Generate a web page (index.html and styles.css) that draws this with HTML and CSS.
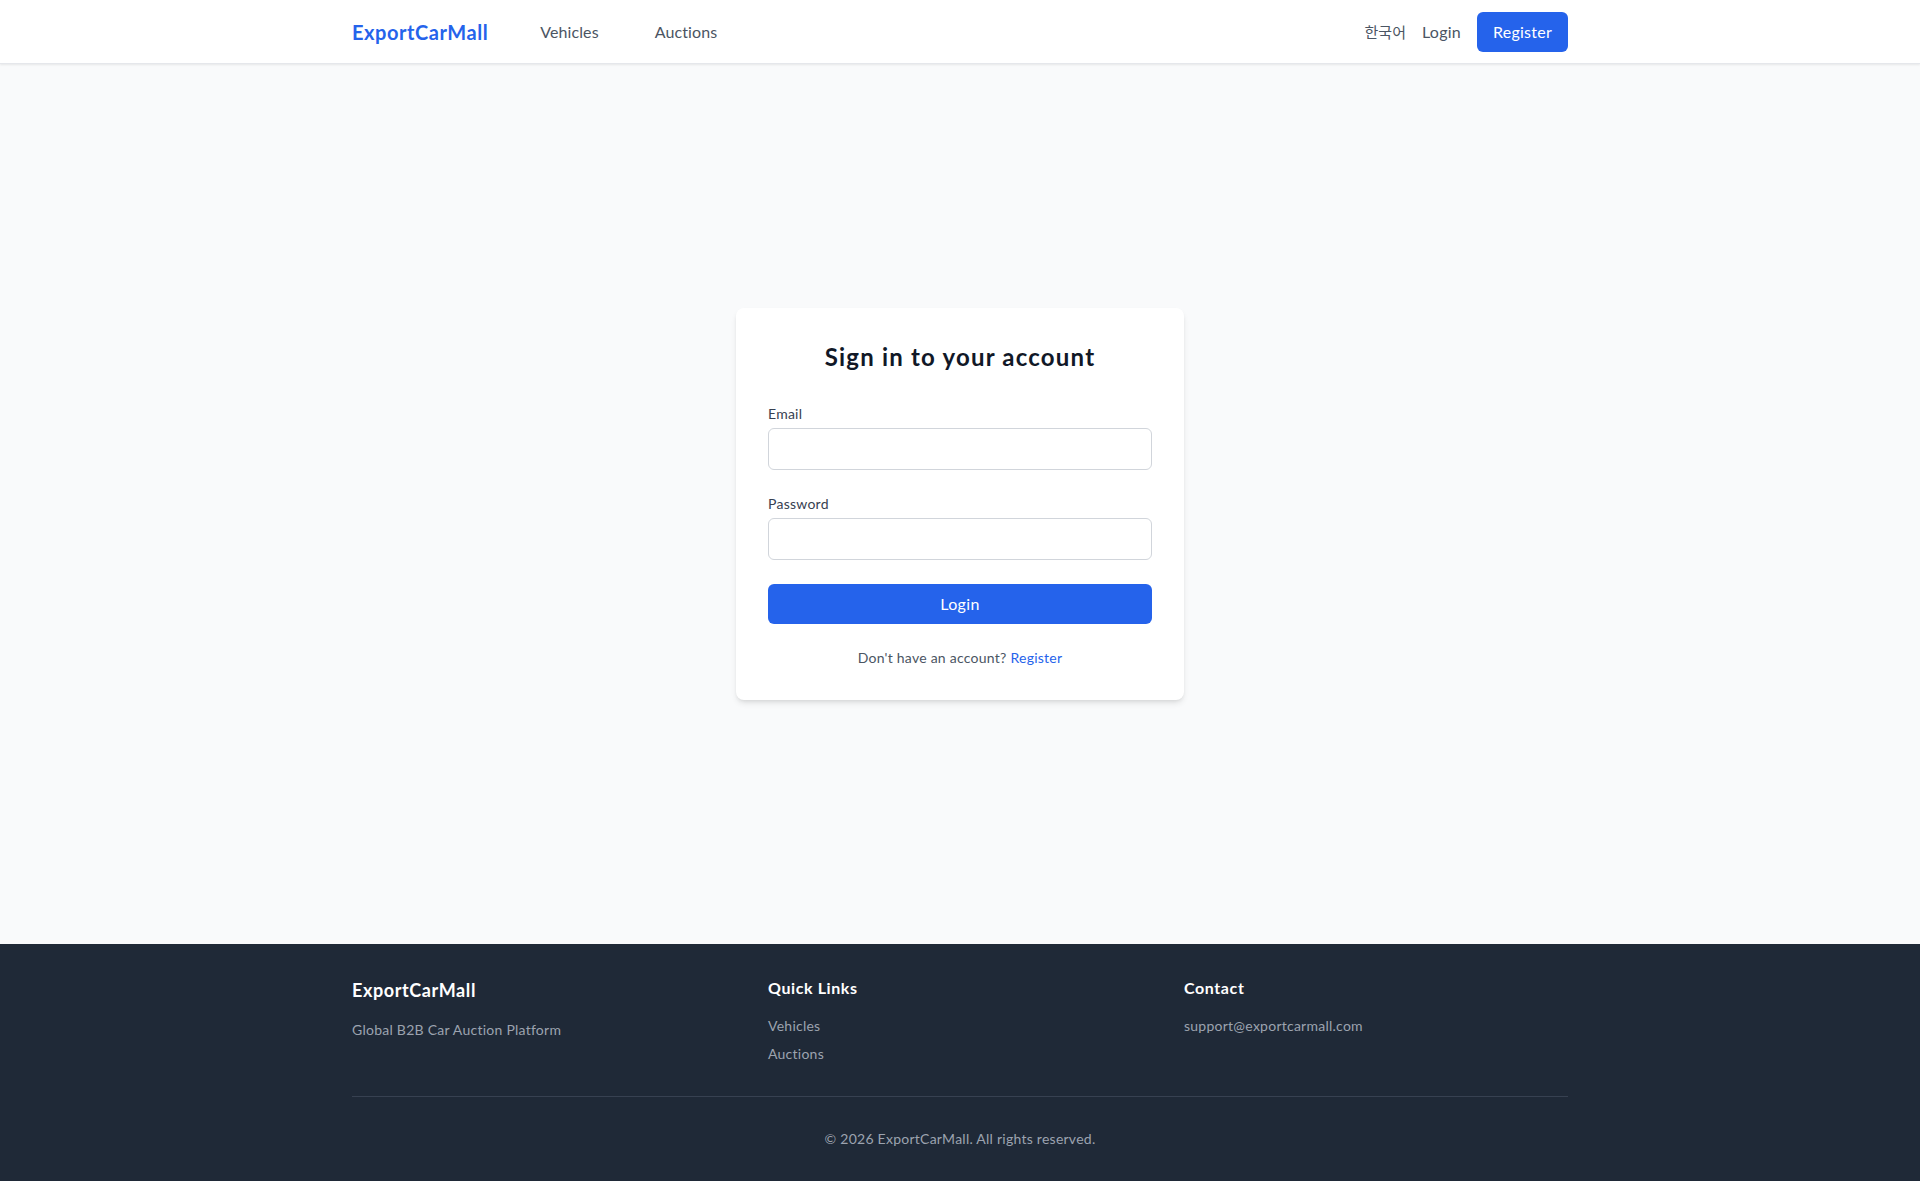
FILE: index.html
```html
<!DOCTYPE html>
<html lang="en">

<head>
  <meta charset="UTF-8">
  <meta name="viewport" content="width=device-width, initial-scale=1.0">
  <title>Login - ExportCarMall</title>
  <link rel="stylesheet" href="styles.css">
</head>

<body>
  <div class="page">
    <header class="topbar">
      <div class="container topbar-inner">
        <div class="nav-left">
          <a href="#" class="logo">ExportCarMall</a>
          <nav class="nav-links">
            <a href="#">Vehicles</a>
            <a href="#">Auctions</a>
          </nav>
        </div>
        <div class="nav-right">
          <button class="lang-btn" type="button">한국어</button>
          <a href="#" class="login-link">Login</a>
          <a href="#" class="btn-register">Register</a>
        </div>
      </div>
    </header>

    <main class="main">
      <div class="login-card">
        <h2>Sign in to your account</h2>
        <form class="login-form">
          <div class="field">
            <label for="email">Email</label>
            <input type="email" id="email">
          </div>
          <div class="field">
            <label for="password">Password</label>
            <input type="password" id="password">
          </div>
          <button type="submit" class="btn-login">Login</button>
        </form>
        <p class="signup-note">Don't have an account? <a href="#">Register</a></p>
      </div>
    </main>

    <footer class="footer">
      <div class="container">
        <div class="footer-grid">
          <div>
            <h3 class="footer-brand">ExportCarMall</h3>
            <p class="footer-text">Global B2B Car Auction Platform</p>
          </div>
          <div>
            <h4>Quick Links</h4>
            <ul class="footer-links">
              <li><a href="#">Vehicles</a></li>
              <li><a href="#">Auctions</a></li>
            </ul>
          </div>
          <div>
            <h4>Contact</h4>
            <p class="footer-text">support@exportcarmall.com</p>
          </div>
        </div>
        <div class="footer-bottom">
          <p>© 2026 ExportCarMall. All rights reserved.</p>
        </div>
      </div>
    </footer>
  </div>
</body>

</html>
```

FILE: styles.css
```css
* {
  box-sizing: border-box;
}
body {
  margin: 0;
  font-family: Lato, "Noto Sans CJK KR", sans-serif;
  letter-spacing: 0.25px;
  background-color: #f9fafb;
  color: #111827;
}
a {
  text-decoration: none;
}
.page {
  min-height: 100vh;
  display: flex;
  flex-direction: column;
}
.container {
  max-width: 1280px;
  margin: 0 auto;
  padding: 0 32px;
}

/* header */
.topbar {
  background-color: #fff;
  box-shadow: 0 1px 2px rgba(0, 0, 0, 0.08);
  border-bottom: 1px solid #e5e7eb;
}
.topbar-inner {
  height: 63px;
  display: flex;
  justify-content: space-between;
  align-items: center;
}
.nav-left {
  display: flex;
  align-items: center;
}
.logo {
  color: #2563eb;
  font-size: 20px;
  font-weight: 700;
  letter-spacing: 0.55px;
}
.nav-links {
  display: flex;
  gap: 32px;
  margin-left: 40px;
}
.nav-links a {
  color: #4b5563;
  font-size: 16px;
  letter-spacing: 0.1px;
  padding: 0 12px;
}
.nav-right {
  display: flex;
  align-items: center;
  gap: 16px;
}
.lang-btn {
  background: none;
  border: none;
  padding: 0;
  font-family: inherit;
  font-size: 15px;
  letter-spacing: 0;
  color: #4b5563;
  cursor: pointer;
}
.login-link {
  color: #4b5563;
  font-size: 16px;
}
.btn-register {
  background-color: #2563eb;
  color: #fff;
  font-size: 16px;
  line-height: 24px;
  padding: 8px 16px;
  border-radius: 6px;
}

/* login card */
.main {
  flex: 1;
  display: flex;
  justify-content: center;
  align-items: center;
}
.login-card {
  width: 448px;
  background-color: #fff;
  border-radius: 8px;
  box-shadow: 0 4px 6px -1px rgba(0, 0, 0, 0.1), 0 2px 4px -2px rgba(0, 0, 0, 0.1);
  padding: 32px;
}
.login-card h2 {
  margin: 0 0 30px;
  text-align: center;
  font-size: 24px;
  line-height: 34px;
  font-weight: 700;
  letter-spacing: 1.2px;
  color: #111827;
}
.field {
  margin-bottom: 24px;
}
.field label {
  display: block;
  font-size: 14px;
  line-height: 20px;
  color: #374151;
  margin-bottom: 4px;
}
.field input {
  display: block;
  width: 100%;
  padding: 8px 12px;
  font-size: 16px;
  line-height: 24px;
  font-family: inherit;
  border: 1px solid #d1d5db;
  border-radius: 6px;
}
.btn-login {
  display: block;
  width: 100%;
  padding: 8px 16px;
  font-family: inherit;
  font-size: 16px;
  line-height: 24px;
  letter-spacing: 0.3px;
  color: #fff;
  background-color: #2563eb;
  border: none;
  border-radius: 6px;
  cursor: pointer;
}
.signup-note {
  margin: 24px 0 0;
  text-align: center;
  font-size: 14px;
  line-height: 20px;
  color: #4b5563;
}
.signup-note a {
  color: #2563eb;
}

/* footer */
.footer {
  background-color: #1f2937;
  color: #fff;
  padding: 32px 0;
}
.footer-grid {
  display: grid;
  grid-template-columns: repeat(3, 1fr);
  gap: 32px;
}
.footer-brand {
  margin: 0 0 16px;
  font-size: 18px;
  line-height: 28px;
  font-weight: 700;
  letter-spacing: 0.6px;
}
.footer h4 {
  margin: 0 0 16px;
  font-size: 16px;
  line-height: 24px;
  font-weight: 700;
  letter-spacing: 0.6px;
}
.footer-text {
  margin: 0;
  font-size: 14px;
  line-height: 20px;
  color: #9ca3af;
}
.footer-links {
  list-style: none;
  margin: 0;
  padding: 0;
}
.footer-links li {
  margin-bottom: 8px;
  font-size: 14px;
  line-height: 20px;
}
.footer-links li:last-child {
  margin-bottom: 0;
}
.footer-links a {
  color: #9ca3af;
}
.footer-bottom {
  margin-top: 32px;
  padding-top: 32px;
  border-top: 1px solid #374151;
  text-align: center;
}
.footer-bottom p {
  margin: 0;
  font-size: 14px;
  line-height: 20px;
  color: #9ca3af;
}
```
